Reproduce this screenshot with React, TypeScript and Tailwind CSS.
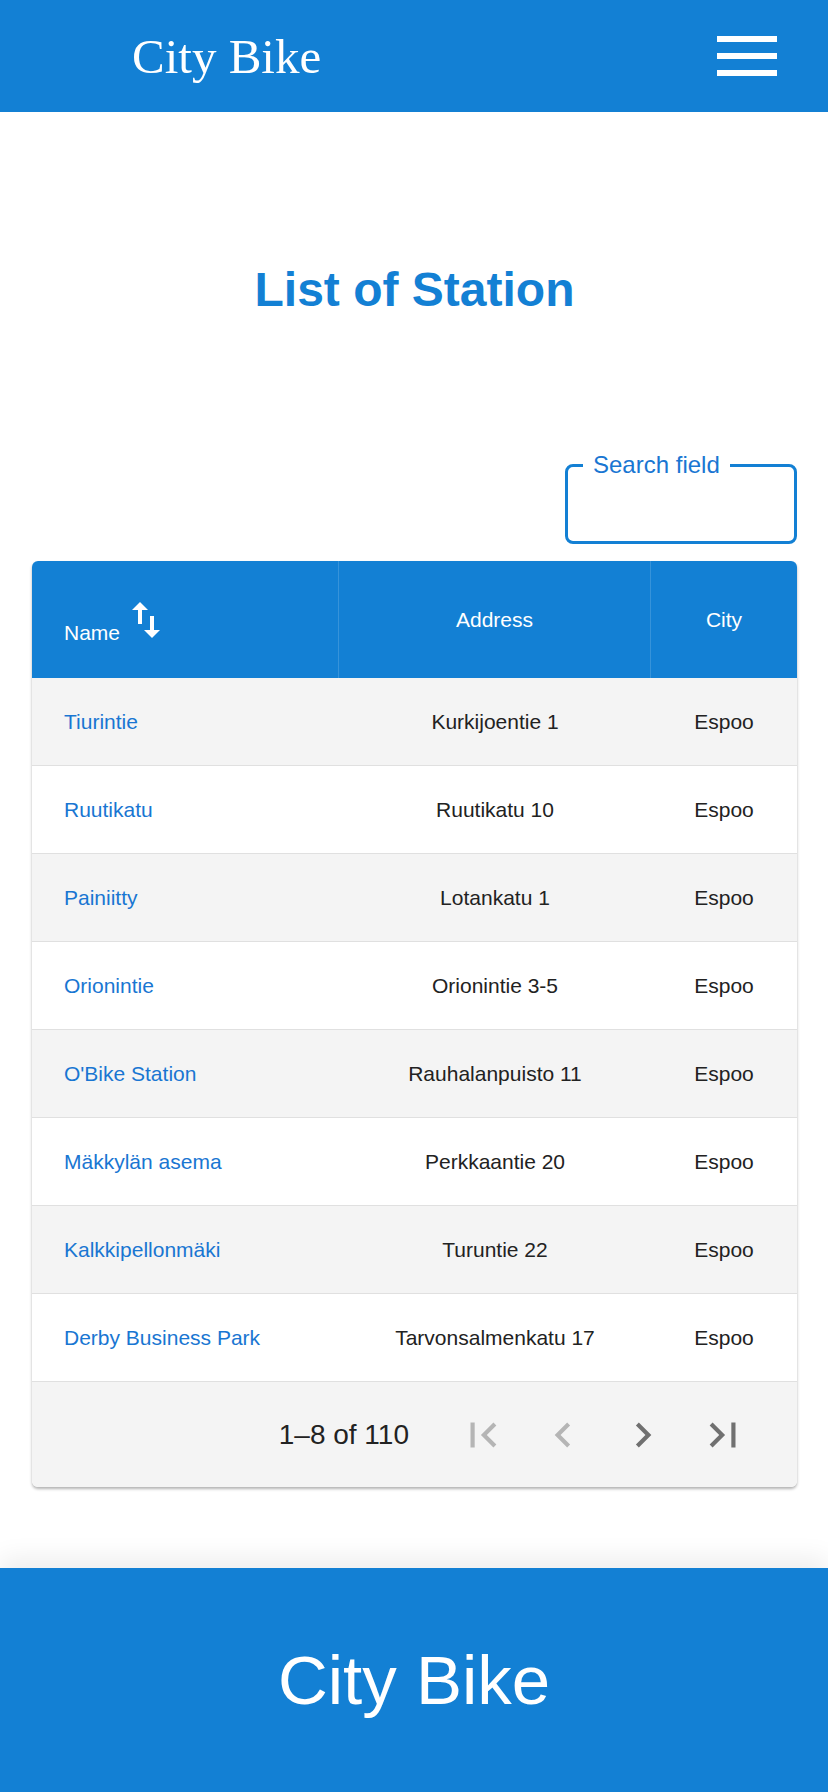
import React from "react";

type Station = { name: string; address: string; city: string };

const stations: Station[] = [
  { name: "Tiurintie", address: "Kurkijoentie 1", city: "Espoo" },
  { name: "Ruutikatu", address: "Ruutikatu 10", city: "Espoo" },
  { name: "Painiitty", address: "Lotankatu 1", city: "Espoo" },
  { name: "Orionintie", address: "Orionintie 3-5", city: "Espoo" },
  { name: "O'Bike Station", address: "Rauhalanpuisto 11", city: "Espoo" },
  { name: "Mäkkylän asema", address: "Perkkaantie 20", city: "Espoo" },
  { name: "Kalkkipellonmäki", address: "Turuntie 22", city: "Espoo" },
  { name: "Derby Business Park", address: "Tarvonsalmenkatu 17", city: "Espoo" },
];

const cols = "grid grid-cols-[307px_312px_146px]";

function PageIcon({ d, disabled }: { d: string; disabled?: boolean }) {
  return (
    <button
      type="button"
      className={`flex h-[50px] w-[50px] items-center justify-center ${
        disabled ? "text-[#b5b5b5]" : "text-[#707070]"
      }`}
    >
      <svg viewBox="0 0 24 24" className="h-[50px] w-[50px]" fill="currentColor">
        <path d={d} />
      </svg>
    </button>
  );
}

export default function App() {
  return (
    <div className="min-h-screen bg-white font-['Liberation_Sans',Arial,sans-serif] text-[#222]">
      {/* Top bar */}
      <header className="flex h-[112px] items-center justify-between bg-[#1380d4] pl-[132px] pr-[51px]">
        <span className="font-['Liberation_Serif','Times_New_Roman',serif] text-[49px] leading-none text-white">
          City Bike
        </span>
        <button type="button" className="flex w-[60px] flex-col gap-[11px]">
          <span className="h-[6px] w-full bg-white" />
          <span className="h-[6px] w-full bg-white" />
          <span className="h-[6px] w-full bg-white" />
        </button>
      </header>

      <main className="pl-[32px] pr-[31px] pb-[81px]">
        <h1 className="mt-[150px] text-center text-[48px] font-bold leading-[56px] text-[#1380d4]">
          List of Station
        </h1>

        {/* Search */}
        <div className="mt-[135px] flex justify-end">
          <fieldset className="h-[91px] w-[232px] rounded-[8px] border-[3px] border-[#1380d4] px-0">
            <legend className="ml-[15px] px-[10px] text-[24px] leading-[24px] text-[#1976d2]">
              Search field
            </legend>
            <input className="h-full w-full bg-transparent px-3 text-[20px] outline-none" />
          </fieldset>
        </div>

        {/* Table */}
        <div className="mt-[17px] overflow-hidden rounded-[6px] shadow-[0_2px_3px_rgba(0,0,0,0.3)]">
          <div className={`${cols} h-[117px] bg-[#1380d4] text-[21px] text-white`}>
            <div className="flex items-center border-r border-white/15 pl-[32px]">
              <div className="flex items-end">
                <span className="leading-[23px]">Name</span>
                <svg viewBox="0 0 24 24" className="ml-[2px] h-[48px] w-[48px]" fill="currentColor">
                  <path d="M16 17.01V10h-2v7.01h-3L15 21l4-3.99h-3zM9 3 5 6.99h3V14h2V6.99h3L9 3z" />
                </svg>
              </div>
            </div>
            <div className="flex items-center justify-center border-r border-white/15">Address</div>
            <div className="flex items-center justify-center">City</div>
          </div>

          {stations.map((s, i) => (
            <div
              key={s.name}
              className={`${cols} h-[88px] border-b border-[#e0e0e0] text-[21px] ${
                i % 2 === 0 ? "bg-[#f4f4f4]" : "bg-white"
              }`}
            >
              <div className="flex items-center pl-[32px] text-[#1976d2]">{s.name}</div>
              <div className="flex items-center justify-center">{s.address}</div>
              <div className="flex items-center justify-center">{s.city}</div>
            </div>
          ))}

          <div className="flex h-[105px] items-center justify-end bg-[#f4f4f4] pr-[49px]">
            <span className="mr-[49px] text-[28px]">1–8 of 110</span>
            <div className="flex gap-[30px]">
              <PageIcon disabled d="M18.41 16.59 13.82 12l4.59-4.59L17 6l-6 6 6 6zM6 6h2v12H6z" />
              <PageIcon disabled d="M15.41 7.41 14 6l-6 6 6 6 1.41-1.41L10.83 12z" />
              <PageIcon d="M10 6 8.59 7.41 13.17 12l-4.58 4.59L10 18l6-6z" />
              <PageIcon d="M5.59 7.41 10.18 12l-4.59 4.59L7 18l6-6-6-6zM16 6h2v12h-2z" />
            </div>
          </div>
        </div>
      </main>

      <footer className="flex h-[224px] items-center justify-center bg-[#1380d4] shadow-[0_-10px_24px_rgba(0,0,0,0.07)]">
        <span className="text-[69px] leading-none text-white">City Bike</span>
      </footer>
    </div>
  );
}
